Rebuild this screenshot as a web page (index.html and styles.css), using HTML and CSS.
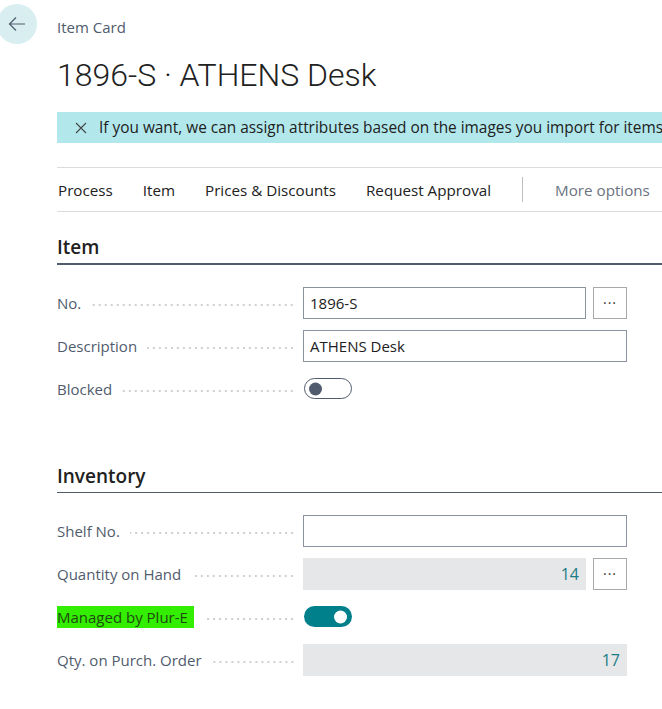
FILE: index.html
```html
<!DOCTYPE html>
<html>
<head>
<meta charset="utf-8">
<link rel="stylesheet" href="styles.css">
</head>
<body>
<div class="page">
  <div class="gutter">
    <div class="back">
      <svg width="20" height="20" viewBox="0 0 20 20"><path d="M18 10H2.5M9 3.5L2.5 10L9 16.5" fill="none" stroke="#505c6d" stroke-width="1.2"/></svg>
    </div>
  </div>
  <div class="main">
    <div class="crumb">Item Card</div>
    <h1 class="title">1896-S · ATHENS Desk</h1>
    <div class="banner">
      <svg class="x" width="12" height="12" viewBox="0 0 12 12"><path d="M1 1L11 11M11 1L1 11" stroke="#444" stroke-width="1.1"/></svg>
      <span class="banner-text">If you want, we can assign attributes based on the images you import for items and show them here.</span>
    </div>
    <div class="actions">
      <span class="act first">Process</span>
      <span class="act">Item</span>
      <span class="act">Prices &amp; Discounts</span>
      <span class="act">Request Approval</span>
      <span class="sep"></span>
      <span class="act muted">More options</span>
    </div>

    <section class="group">
      <h2 class="ghead strong">Item</h2>
      <div class="row">
        <div class="label"><span>No.</span><i class="dots"></i></div>
        <div class="ctrl"><div class="input short">1896-S</div><div class="more">···</div></div>
      </div>
      <div class="row">
        <div class="label"><span>Description</span><i class="dots"></i></div>
        <div class="ctrl"><div class="input">ATHENS Desk</div></div>
      </div>
      <div class="row">
        <div class="label"><span>Blocked</span><i class="dots"></i></div>
        <div class="ctrl"><div class="toggle off"><span class="knob"></span></div></div>
      </div>
    </section>

    <section class="group inv">
      <h2 class="ghead">Inventory</h2>
      <div class="row">
        <div class="label"><span>Shelf No.</span><i class="dots"></i></div>
        <div class="ctrl"><div class="input"></div></div>
      </div>
      <div class="row">
        <div class="label"><span>Quantity on Hand</span><i class="dots"></i></div>
        <div class="ctrl"><div class="input ro short num">14</div><div class="more">···</div></div>
      </div>
      <div class="row">
        <div class="label"><span class="hl">Managed by Plur-E</span><i class="dots"></i></div>
        <div class="ctrl"><div class="toggle on"><span class="knob"></span></div></div>
      </div>
      <div class="row">
        <div class="label"><span>Qty. on Purch. Order</span><i class="dots"></i></div>
        <div class="ctrl"><div class="input ro num">17</div></div>
      </div>
    </section>
  </div>
</div>
</body>
</html>
```

FILE: styles.css
```css
* { box-sizing: border-box; }
html, body { margin: 0; padding: 0; background: #fff; }
body {
  font-family: "Open Sans", "Noto Sans", sans-serif;
  font-size: 15px;
  color: #212121;
  overflow: hidden;
  width: 662px;
  height: 709px;
}
.page { display: flex; }
.gutter { width: 57px; flex: none; }
.back {
  width: 40px; height: 40px; border-radius: 50%;
  background: #d8eef1;
  margin-left: -3px; margin-top: 4px;
  display: flex; align-items: center; justify-content: center;
}
.main { flex: 1; min-width: 0; overflow: hidden; }
.crumb { margin-top: 17px; line-height: 20px; font-size: 15px; color: #505c6d; }
.title {
  margin: 18px 0 0; font-family: "Roboto", "Open Sans", sans-serif;
  font-weight: 300; font-size: 32px; line-height: 40px;
  color: #212121;
}
.banner {
  margin-top: 17px; height: 31px; background: #b2e8ec;
  display: flex; align-items: center; white-space: nowrap;
  padding-left: 18px;
}
.banner .x { flex: none; margin-right: 12px; }
.banner-text { font-size: 15.4px; color: #212121; }
.actions {
  margin-top: 24px; height: 45px;
  border-top: 1px solid #dcdcdc; border-bottom: 1px solid #dcdcdc;
  display: flex; align-items: center; white-space: nowrap; overflow: hidden;
  font-size: 15.2px; color: #212121;
}
.act { padding: 0 15px; flex: none; }
.act.first { padding-left: 1px; }
.act.muted { color: #6b7380; }
.sep { flex: none; width: 1px; height: 25px; background: #bfbfbf; margin: 0 17px 0 16px; }

.group { margin-top: 22px; }
.ghead {
  margin: 0; font-size: 19px; font-weight: 600; line-height: 26px;
  color: #212121; padding-bottom: 3px;
  border-bottom: 1px solid #505c6d;
}
.ghead.strong { border-bottom-width: 2px; }
.group.inv { margin-top: 53px; }
.row { display: flex; align-items: center; height: 43px; }
.ghead + .row { margin-top: 16px; }
.label {
  width: 246px; flex: none; display: flex; align-items: center; color: #505c6d;
  padding-right: 8px; white-space: nowrap;
}
.dots {
  flex: 1; height: 2px; margin-left: 10px; margin-top: 5px;
  background-image: radial-gradient(circle, #d0d0d0 0.8px, transparent 1px);
  background-size: 6px 2px; background-position: right center;
}
.hl { background: #33ee00; color: #1f4a10; padding: 1px 6px 1px 3px; margin-left: -3px; }
.ctrl { display: flex; align-items: center; gap: 7px; }
.input {
  width: 324px; height: 32px; border: 1px solid #8a939e; flex: none;
  padding: 0 6px; display: flex; align-items: center; color: #212121;
}
.input.short { width: 283px; }
.input.ro { background: #e6e7e8; border-color: #e6e7e8; }
.input.num { justify-content: flex-end; color: #1c7c86; font-size: 16px; }
.more {
  width: 34px; height: 32px; border: 1px solid #a9a9a9; flex: none;
  display: flex; align-items: center; justify-content: center;
  font-size: 14px; letter-spacing: 1px; color: #333; line-height: 1;
}
.toggle {
  width: 48px; height: 21px; border-radius: 11px; position: relative;
  margin-left: 1px; flex: none;
}
.toggle.off { border: 1px solid #505c6d; background: #fff; }
.toggle.on { background: #00808a; }
.knob { position: absolute; top: 50%; width: 13px; height: 13px; border-radius: 50%; transform: translateY(-50%); }
.toggle.off .knob { left: 4px; background: #505c6d; }
.toggle.on .knob { right: 5px; background: #fff; }
```
